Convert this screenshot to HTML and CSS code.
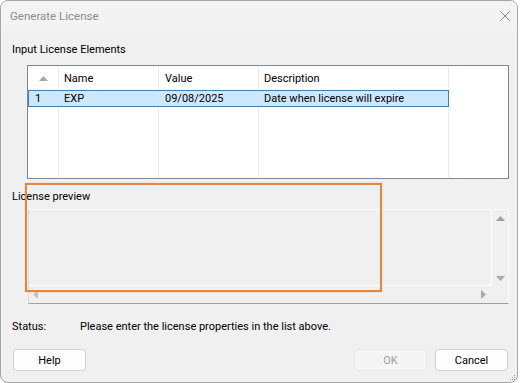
FILE: index.html
```html
<!DOCTYPE html>
<html lang="en">
<head>
    <meta charset="UTF-8">
    <title>Generate License</title>
    <link rel="stylesheet" href="styles.css">
</head>
<body>
    <div class="window">
        <div class="titlebar">
            <span class="title">Generate License</span>
            <svg class="close" width="12" height="12" viewBox="0 0 12 12">
                <path d="M1 1 L11 11 M11 1 L1 11" stroke="#8a8a8a" stroke-width="1" fill="none"/>
            </svg>
        </div>
        <div class="content">
            <div class="label first">Input License Elements</div>
            <div class="list">
                <table>
                    <colgroup>
                        <col style="width: 31px">
                        <col style="width: 100px">
                        <col style="width: 100px">
                        <col style="width: 190px">
                        <col>
                    </colgroup>
                    <tr class="head">
                        <th class="num">
                            <svg width="9" height="5" viewBox="0 0 9 5"><path d="M4.5 0 L9 5 L0 5 Z" fill="#a8a89f"/></svg>
                        </th>
                        <th>Name</th>
                        <th class="val">Value</th>
                        <th>Description</th>
                        <th class="last"></th>
                    </tr>
                    <tr class="selected">
                        <td class="num">1</td>
                        <td>EXP</td>
                        <td class="val">09/08/2025</td>
                        <td class="end">Date when license will expire</td>
                        <td class="last"></td>
                    </tr>
                    <tr class="filler">
                        <td></td>
                        <td></td>
                        <td></td>
                        <td></td>
                        <td class="last"></td>
                    </tr>
                </table>
            </div>
            <div class="label">License preview</div>
            <div class="preview">
                <div class="text-area"></div>
                <div class="vscroll">
                    <svg width="9" height="5" viewBox="0 0 9 5"><path d="M4.5 0 L9 5 L0 5 Z" fill="#a2a2a2"/></svg>
                    <svg width="9" height="5" viewBox="0 0 9 5"><path d="M0 0 L9 0 L4.5 5 Z" fill="#aaaaaa"/></svg>
                </div>
                <div class="hscroll">
                    <svg width="5" height="9" viewBox="0 0 5 9"><path d="M5 0 L5 9 L0 4.5 Z" fill="#c4c4c4"/></svg>
                    <svg width="5" height="9" viewBox="0 0 5 9"><path d="M0 0 L5 4.5 L0 9 Z" fill="#a8a8a8"/></svg>
                </div>
                <div class="corner"></div>
            </div>
            <div class="status">
                <span class="status-label">Status:</span>
                <span>Please enter the license properties in the list above.</span>
            </div>
            <div class="buttons">
                <button class="btn">Help</button>
                <span class="spacer"></span>
                <button class="btn" disabled>OK</button>
                <button class="btn">Cancel</button>
            </div>
        </div>
        <div class="highlight"></div>
        <svg class="grip" width="7" height="7" viewBox="0 0 7 7">
            <rect x="5" y="1" width="1" height="1" fill="#a0a0a0"/>
            <rect x="3" y="3" width="1" height="1" fill="#a0a0a0"/>
            <rect x="5" y="3" width="1" height="1" fill="#a0a0a0"/>
            <rect x="1" y="5" width="1" height="1" fill="#a0a0a0"/>
            <rect x="3" y="5" width="1" height="1" fill="#a0a0a0"/>
            <rect x="5" y="5" width="1" height="1" fill="#a0a0a0"/>
        </svg>
    </div>
</body>
</html>
```

FILE: styles.css
```css
* {
    margin: 0;
    padding: 0;
    box-sizing: border-box;
}
body {
    font-family: 'Roboto', 'Liberation Sans', sans-serif;
    font-size: 11px;
    color: #000;
    background-color: #fff;
    width: 520px;
    height: 383px;
    overflow: hidden;
}
.window {
    position: relative;
    width: 518px;
    height: 383px;
    border: 1px solid #a6a6a6;
    border-radius: 8px;
    background-color: #f0f0f0;
    overflow: hidden;
}
.titlebar {
    height: 30px;
    background-color: #f3f3f3;
    display: flex;
    align-items: center;
    justify-content: space-between;
    padding: 0 6px 0 9px;
}
.title {
    color: #8c8c8c;
    font-size: 11.5px;
}
.close {
    margin-top: -1px;
}
.content {
    padding: 0 9px 0 11px;
}
.label {
    height: 16px;
    line-height: 16px;
    margin-top: 10px;
}
.label.first {
    margin-top: 11px;
}
.list {
    margin: 7px 0 0 15px;
    width: 482px;
    height: 114px;
    border: 1px solid #828790;
    background-color: #fff;
}
table {
    width: 480px;
    height: 112px;
    table-layout: fixed;
    border-collapse: separate;
    border-spacing: 0;
}
th, td {
    text-align: left;
    font-weight: normal;
    padding: 0 0 0 5px;
    border-right: 1px solid #e8ecf1;
    white-space: nowrap;
    overflow: hidden;
}
th.last, td.last {
    border-right: none;
}
th.val, td.val {
    padding-left: 6px;
}
.head th {
    height: 24px;
}
th.num {
    text-align: center;
    padding: 0;
}
th.num svg {
    display: block;
    margin: 0 auto;
}
.selected td {
    height: 17px;
    background-color: #cce8ff;
    border-top: 1px solid #3f80b4;
    border-bottom: 1px solid #3f80b4;
    border-right: none;
    line-height: 14px;
}
.selected td.num {
    border-left: 1px solid #3f80b4;
    padding-left: 6px;
}
.selected td.end {
    border-right: 1px solid #3f80b4;
}
.selected td.last {
    background-color: #fff;
    border-top: none;
    border-bottom: none;
}
.filler td {
    height: 71px;
}
.preview {
    margin: 4px 0 0 16px;
    width: 481px;
    height: 95px;
    border-style: solid;
    border-width: 1px;
    border-color: #fbfbfb #f8f8f8 #a0a0a0 #dadada;
    display: grid;
    grid-template-columns: 463px 16px;
    grid-template-rows: 76px 17px;
}
.text-area {
    border-right: 1px solid #fdfdfd;
    border-bottom: 1px solid #fdfdfd;
}
.vscroll {
    display: flex;
    flex-direction: column;
    justify-content: space-between;
    align-items: center;
    padding: 6px 0 5px 0;
}
.hscroll {
    display: flex;
    justify-content: space-between;
    align-items: center;
    padding: 0 6px 0 4px;
}
.status {
    margin-top: 15px;
    height: 16px;
    line-height: 16px;
    display: flex;
}
.status-label {
    width: 68px;
}
.buttons {
    margin: 14px 0 0 1px;
    display: flex;
    gap: 8px;
}
.spacer {
    flex: 1;
}
.btn {
    width: 73px;
    height: 22px;
    font-family: inherit;
    font-size: 11px;
    color: #000;
    background-color: #fdfdfd;
    border: 1px solid #d0d0d0;
    border-radius: 4px;
}
.btn:disabled {
    color: #a0a0a0;
    background-color: #f5f5f5;
    border-color: #e5e5e5;
}
.highlight {
    position: absolute;
    left: 24px;
    top: 182px;
    width: 357px;
    height: 109px;
    border: 2px solid #e5873f;
    box-shadow: 0 0 1px rgba(229, 135, 63, 0.6);
}
.grip {
    position: absolute;
    right: 1px;
    bottom: 1px;
}
```
